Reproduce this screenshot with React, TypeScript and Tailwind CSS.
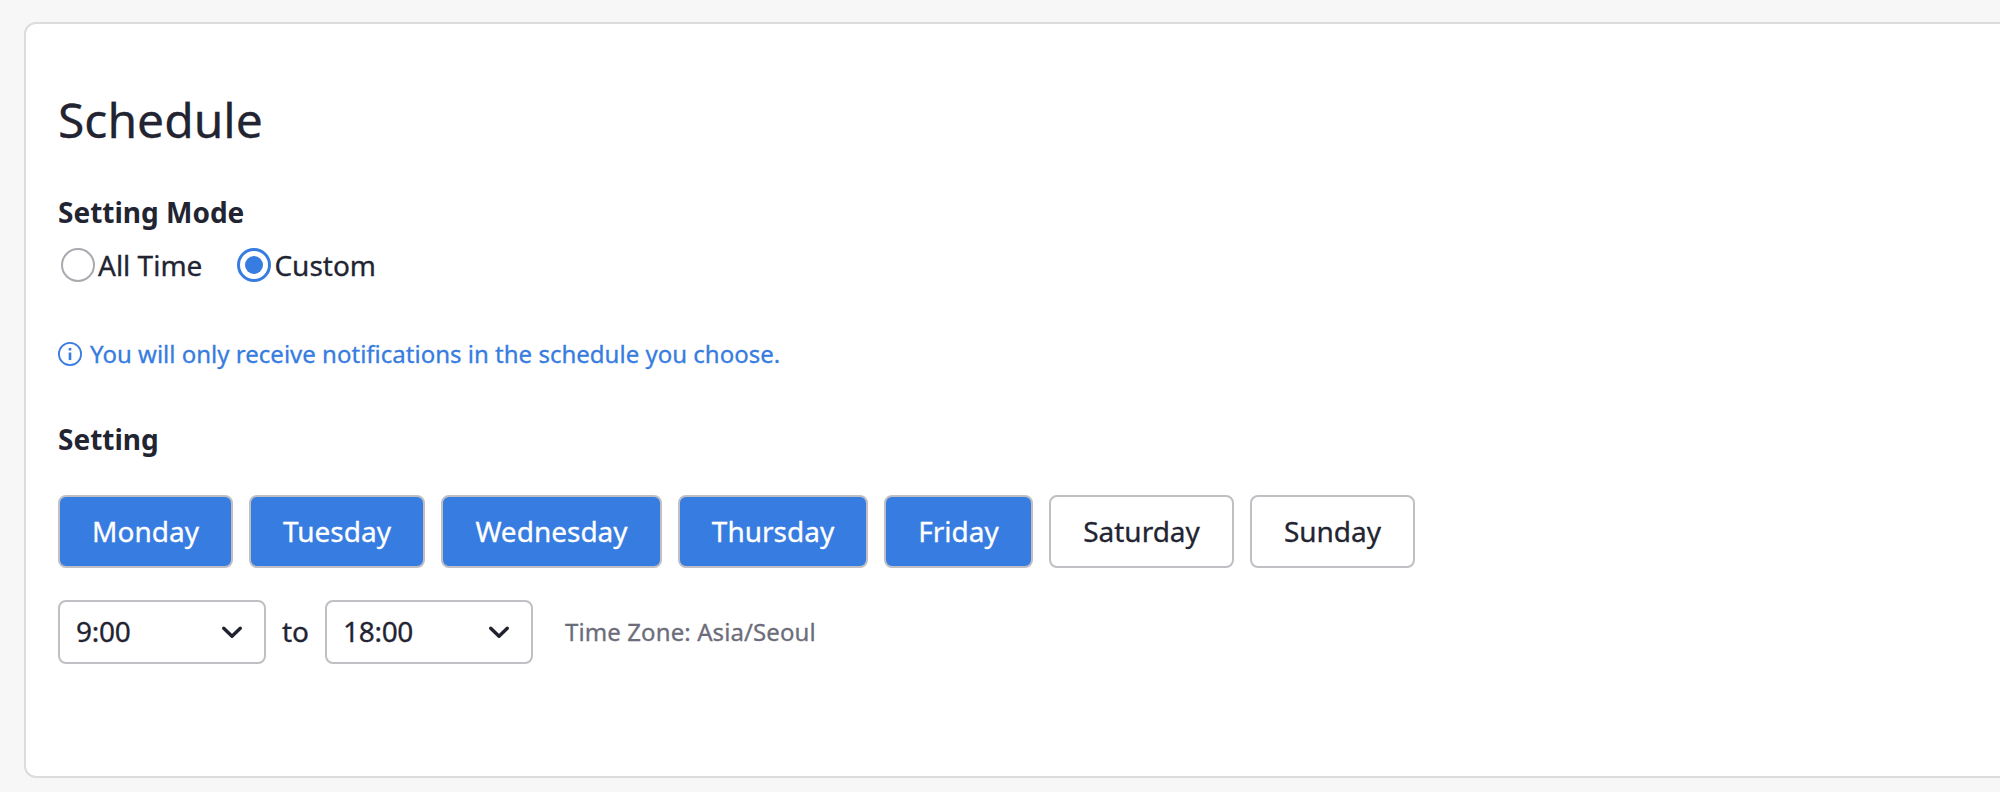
const days = [
  { name: "Monday", on: true, w: "w-[175px]" },
  { name: "Tuesday", on: true, w: "w-[176px]" },
  { name: "Wednesday", on: true, w: "w-[221px]" },
  { name: "Thursday", on: true, w: "w-[190px]" },
  { name: "Friday", on: true, w: "w-[149px]" },
  { name: "Saturday", on: false, w: "w-[185px]" },
  { name: "Sunday", on: false, w: "w-[165px]" },
];

function TimeSelect({ value }: { value: string }) {
  return (
    <button className="flex h-16 w-[208px] items-center justify-between rounded-[8px] border-2 border-[#bfbfc4] bg-white pr-5 pl-4 text-[28px] tracking-[-0.3px]">
      <span className="pb-0.5">{value}</span>
      <svg width="24" height="24" viewBox="0 0 24 24" fill="none" stroke="#20222f" strokeWidth="3.4" strokeLinecap="round" strokeLinejoin="round">
        <path d="M3.7 8.3l8.3 8 8.3-8" />
      </svg>
    </button>
  );
}

export default function App() {
  return (
    <div className="h-[792px] w-[2000px] overflow-hidden bg-[#f7f7f7] pt-[22px] pl-6 font-['Noto_Sans',sans-serif] text-[#222432] [-webkit-text-stroke:0.3px]">
      <section className="h-[756px] w-[2100px] rounded-[12px] border-2 border-[#dcdcdc] bg-white pt-[61px] pl-8">
        <h1 className="h-[70px] text-[48px] leading-[70px]">Schedule</h1>
        <h2 className="mt-[37px] h-10 text-[28px] leading-10 font-bold [-webkit-text-stroke:0px]">Setting Mode</h2>
        <div className="mt-[13px] flex h-10 items-center text-[28px] leading-10">
          <span className="ml-[3px] size-[34px] rounded-full border-2 border-[#a9a9b0]" />
          <span className="ml-[3px]">All Time</span>
          <span className="ml-[35px] flex size-[34px] items-center justify-center rounded-full border-[3px] border-[#377ce0]">
            <span className="size-[18px] rounded-full bg-[#377ce0]" />
          </span>
          <span className="ml-[3px]">Custom</span>
        </div>
        <div className="mt-[52px] flex h-[34px] items-center gap-2 text-[24px] leading-[34px] tracking-[0.01px] text-[#377ce0]">
          <svg width="24" height="24" viewBox="0 0 24 24" fill="none" stroke="currentColor">
            <circle cx="12" cy="12" r="11.1" strokeWidth="1.8" />
            <path d="M12 10.5v7.5M12 6v2.4" strokeWidth="2.6" />
          </svg>
          <span>You will only receive notifications in the schedule you choose.</span>
        </div>
        <h2 className="mt-[48px] h-10 text-[28px] leading-10 font-bold [-webkit-text-stroke:0px]">Setting</h2>
        <div className="mt-[36px] flex gap-4">
          {days.map((d) => (
            <button key={d.name} className={`${d.w} h-[73px] rounded-[8px] border-2 border-[#bfbfc4] pb-px text-[28px] ${d.on ? "bg-[#377ce0] text-white" : "bg-white"}`}>
              {d.name}
            </button>
          ))}
        </div>
        <div className="mt-8 flex items-center">
          <TimeSelect value="9:00" />
          <span className="w-[59px] pb-0.5 text-center text-[28px]">to</span>
          <TimeSelect value="18:00" />
          <span className="ml-8 text-[24px] tracking-[0.1px] text-[#6c6d7a]">Time Zone: Asia/Seoul</span>
        </div>
      </section>
    </div>
  );
}
